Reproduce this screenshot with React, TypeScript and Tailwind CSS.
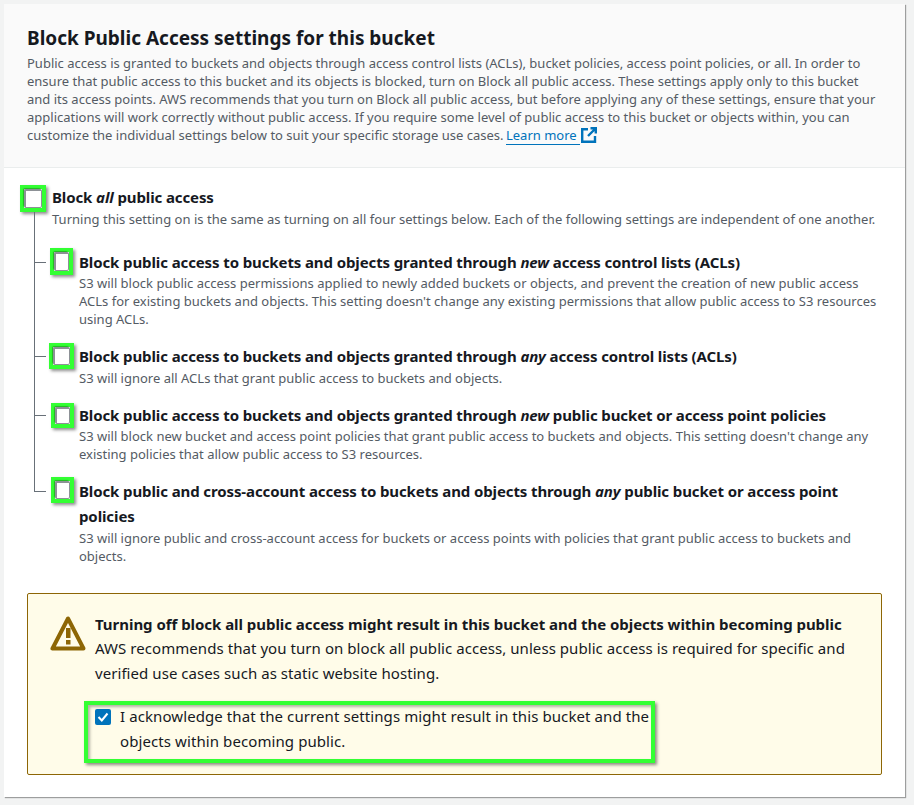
import React from "react";

function Box({ w, h, ml }: { w: string; h: string; ml: string }) {
  return (
    <div className={`${w} ${h} ${ml} shrink-0 border-[4px] border-[#33ff33] shadow-[2px_2px_3px_rgba(0,0,0,0.45)] bg-white`}>
      <div className="w-full h-full rounded-[2px] border-t-[2px] border-l-[2px] border-r-[1px] border-b-[1px] border-[#8d9196] bg-white shadow-[-1px_-1px_1px_rgba(0,0,0,0.3)]" />
    </div>
  );
}

function Row({ box, textMl, mt, headClass, title, children }: { box: React.ReactNode; textMl: string; mt: string; headClass: string; title: React.ReactNode; children: React.ReactNode }) {
  return (
    <div className={`flex items-start ${mt}`}>
      {box}
      <div className={`${textMl} min-w-0`}>
        <div className={`${headClass} text-[15px] font-bold tracking-[-0.11px] text-[#16191f]`}>{title}</div>
        <div className="text-[13px] leading-[18px] text-[#545b64]">{children}</div>
      </div>
    </div>
  );
}

export default function App() {
  return (
    <div className="w-[914px] h-[805px] overflow-hidden bg-[#f2f3f3] pl-[4px] pt-[4px]" style={{ fontFamily: '"Noto Sans", sans-serif' }}>
      <div className="w-[901px] h-[793px] bg-white shadow-[1px_1px_1px_rgba(0,0,0,0.35)]">
        <div className="h-[164px] bg-[#fafafa] border-b border-[#eaeded] pl-[23px] pr-[20px] pt-[20px]">
          <h2 className="text-[19px] leading-[28px] font-bold text-[#16191f]">Block Public Access settings for this bucket</h2>
          <p className="mt-[2px] text-[13px] leading-[18px] text-[#545b64]">
            Public access is granted to buckets and objects through access control lists (ACLs), bucket policies, access point policies, or all. In order to ensure that public access to this bucket and its objects is blocked, turn on Block all public access. These settings apply only to this bucket and its access points. AWS recommends that you turn on Block all public access, but before applying any of these settings, ensure that your applications will work correctly without public access. If you require some level of public access to this bucket or objects within, you can customize the individual settings below to suit your specific storage use cases.{" "}
            <a className="text-[#0073bb] border-b border-[#0073bb] -ml-[1px]">Learn more&nbsp;</a>
            <svg className="inline-block align-[-3px] ml-[1px]" width="16" height="16" viewBox="0 0 16 16" fill="none" stroke="#0073bb" strokeWidth="2.4">
              <path d="M7 2.2H1.2v12.6H14V9" />
              <path d="M9.5 1.2h5.3v5.3M14.5 1.5 7 9" />
            </svg>
          </p>
        </div>

        <div className="relative">
          <div className="absolute left-[30px] top-[44px] w-[1px] h-[280px] bg-[#687078]" />
          <div className="absolute left-[30px] top-[94px] w-[12px] h-[1px] bg-[#687078]" />
          <div className="absolute left-[30px] top-[188px] w-[12px] h-[1px] bg-[#687078]" />
          <div className="absolute left-[30px] top-[247px] w-[12px] h-[1px] bg-[#687078]" />
          <div className="absolute left-[30px] top-[323px] w-[12px] h-[1px] bg-[#687078]" />

          <Row
            mt="pt-[17px]"
            textMl="ml-[6px]"
            headClass="leading-[25px]"
            box={<Box w="w-[26px]" h="h-[27px]" ml="ml-[16px]" />}
            title={<>Block <em>all</em> public access</>}
          >
            <span className="tracking-[0.02px]">Turning this setting on is the same as turning on all four settings below. Each of the following settings are independent of one another.</span>
          </Row>
          <Row
            mt="mt-[20px]"
            textMl="ml-[6px] mr-[20px]"
            headClass="leading-[24px] pt-[2px]"
            box={<Box w="w-[23px]" h="h-[27px]" ml="ml-[46px]" />}
            title={<>Block public access to buckets and objects granted through <em>new</em> access control lists (ACLs)</>}
          >
            S3 will block public access permissions applied to newly added buckets or objects, and prevent the creation of new public access ACLs for existing buckets and objects. This setting doesn't change any existing permissions that allow public access to S3 resources using ACLs.
          </Row>
          <Row
            mt="mt-[15px]"
            textMl="ml-[5px] mr-[20px]"
            headClass="leading-[26px]"
            box={<Box w="w-[25px]" h="h-[26px]" ml="ml-[45px]" />}
            title={<>Block public access to buckets and objects granted through <em>any</em> access control lists (ACLs)</>}
          >
            S3 will ignore all ACLs that grant public access to buckets and objects.
          </Row>
          <Row
            mt="mt-[16px]"
            textMl="ml-[5px] mr-[20px]"
            headClass="leading-[24px]"
            box={<Box w="w-[23px]" h="h-[25px]" ml="ml-[47px]" />}
            title={<>Block public access to buckets and objects granted through <em>new</em> public bucket or access point policies</>}
          >
            S3 will block new bucket and access point policies that grant public access to buckets and objects. This setting doesn't change any existing policies that allow public access to S3 resources.
          </Row>
          <Row
            mt="mt-[14px]"
            textMl="ml-[5px] mr-[50px]"
            headClass="leading-[25px] pt-[2px]"
            box={<Box w="w-[23px]" h="h-[26px]" ml="ml-[47px]" />}
            title={<>Block public and cross-account access to buckets and objects through <em>any</em> public bucket or access point policies</>}
          >
            S3 will ignore public and cross-account access for buckets or access points with policies that grant public access to buckets and objects.
          </Row>

          <div className="mt-[28px] ml-[23px] w-[855px] h-[182px] rounded-[2px] border border-[#8d6605] bg-[#fffce9] flex pl-[22px] pt-[18px]">
            <svg className="shrink-0 mt-[3px]" width="36" height="36" viewBox="0 0 36 36" fill="none">
              <path d="M18 3.5 2.5 33.5h31z" stroke="#8d6605" strokeWidth="4" strokeLinejoin="round" />
              <rect x="16" y="13" width="4.5" height="10" fill="#8d6605" />
              <rect x="16" y="25" width="4.5" height="4.5" fill="#8d6605" />
            </svg>
            <div className="ml-[9px]">
              <div className="text-[15px] leading-[24px] font-bold tracking-[-0.04px] text-[#16191f] whitespace-nowrap">Turning off block all public access might result in this bucket and the objects within becoming public</div>
              <div className="text-[15px] leading-[25px] tracking-[0.06px] text-[#16191f] w-[770px]">AWS recommends that you turn on block all public access, unless public access is required for specific and verified use cases such as static website hosting.</div>
              <div className="-ml-[11px] mt-[15px] w-[571px] h-[62px] border-[4px] border-[#33ff33] shadow-[2px_2px_3px_rgba(0,0,0,0.45),inset_2px_2px_3px_rgba(0,0,0,0.3)] flex pl-[7px]">
                <div className="shrink-0 mt-[4px] w-[16px] h-[16px] rounded-[2px] bg-[#0073bb] flex items-center justify-center">
                  <svg width="12" height="12" viewBox="0 0 12 12" fill="none" stroke="white" strokeWidth="2"><path d="M1.5 6 4.8 9.5 10.5 2.5" /></svg>
                </div>
                <div className="ml-[9px] -mt-[1px] text-[15px] leading-[25px] tracking-[0.09px] text-[#16191f]">I acknowledge that the current settings might result in this bucket and the objects within becoming public.</div>
              </div>
            </div>
          </div>
        </div>
      </div>
    </div>
  );
}
